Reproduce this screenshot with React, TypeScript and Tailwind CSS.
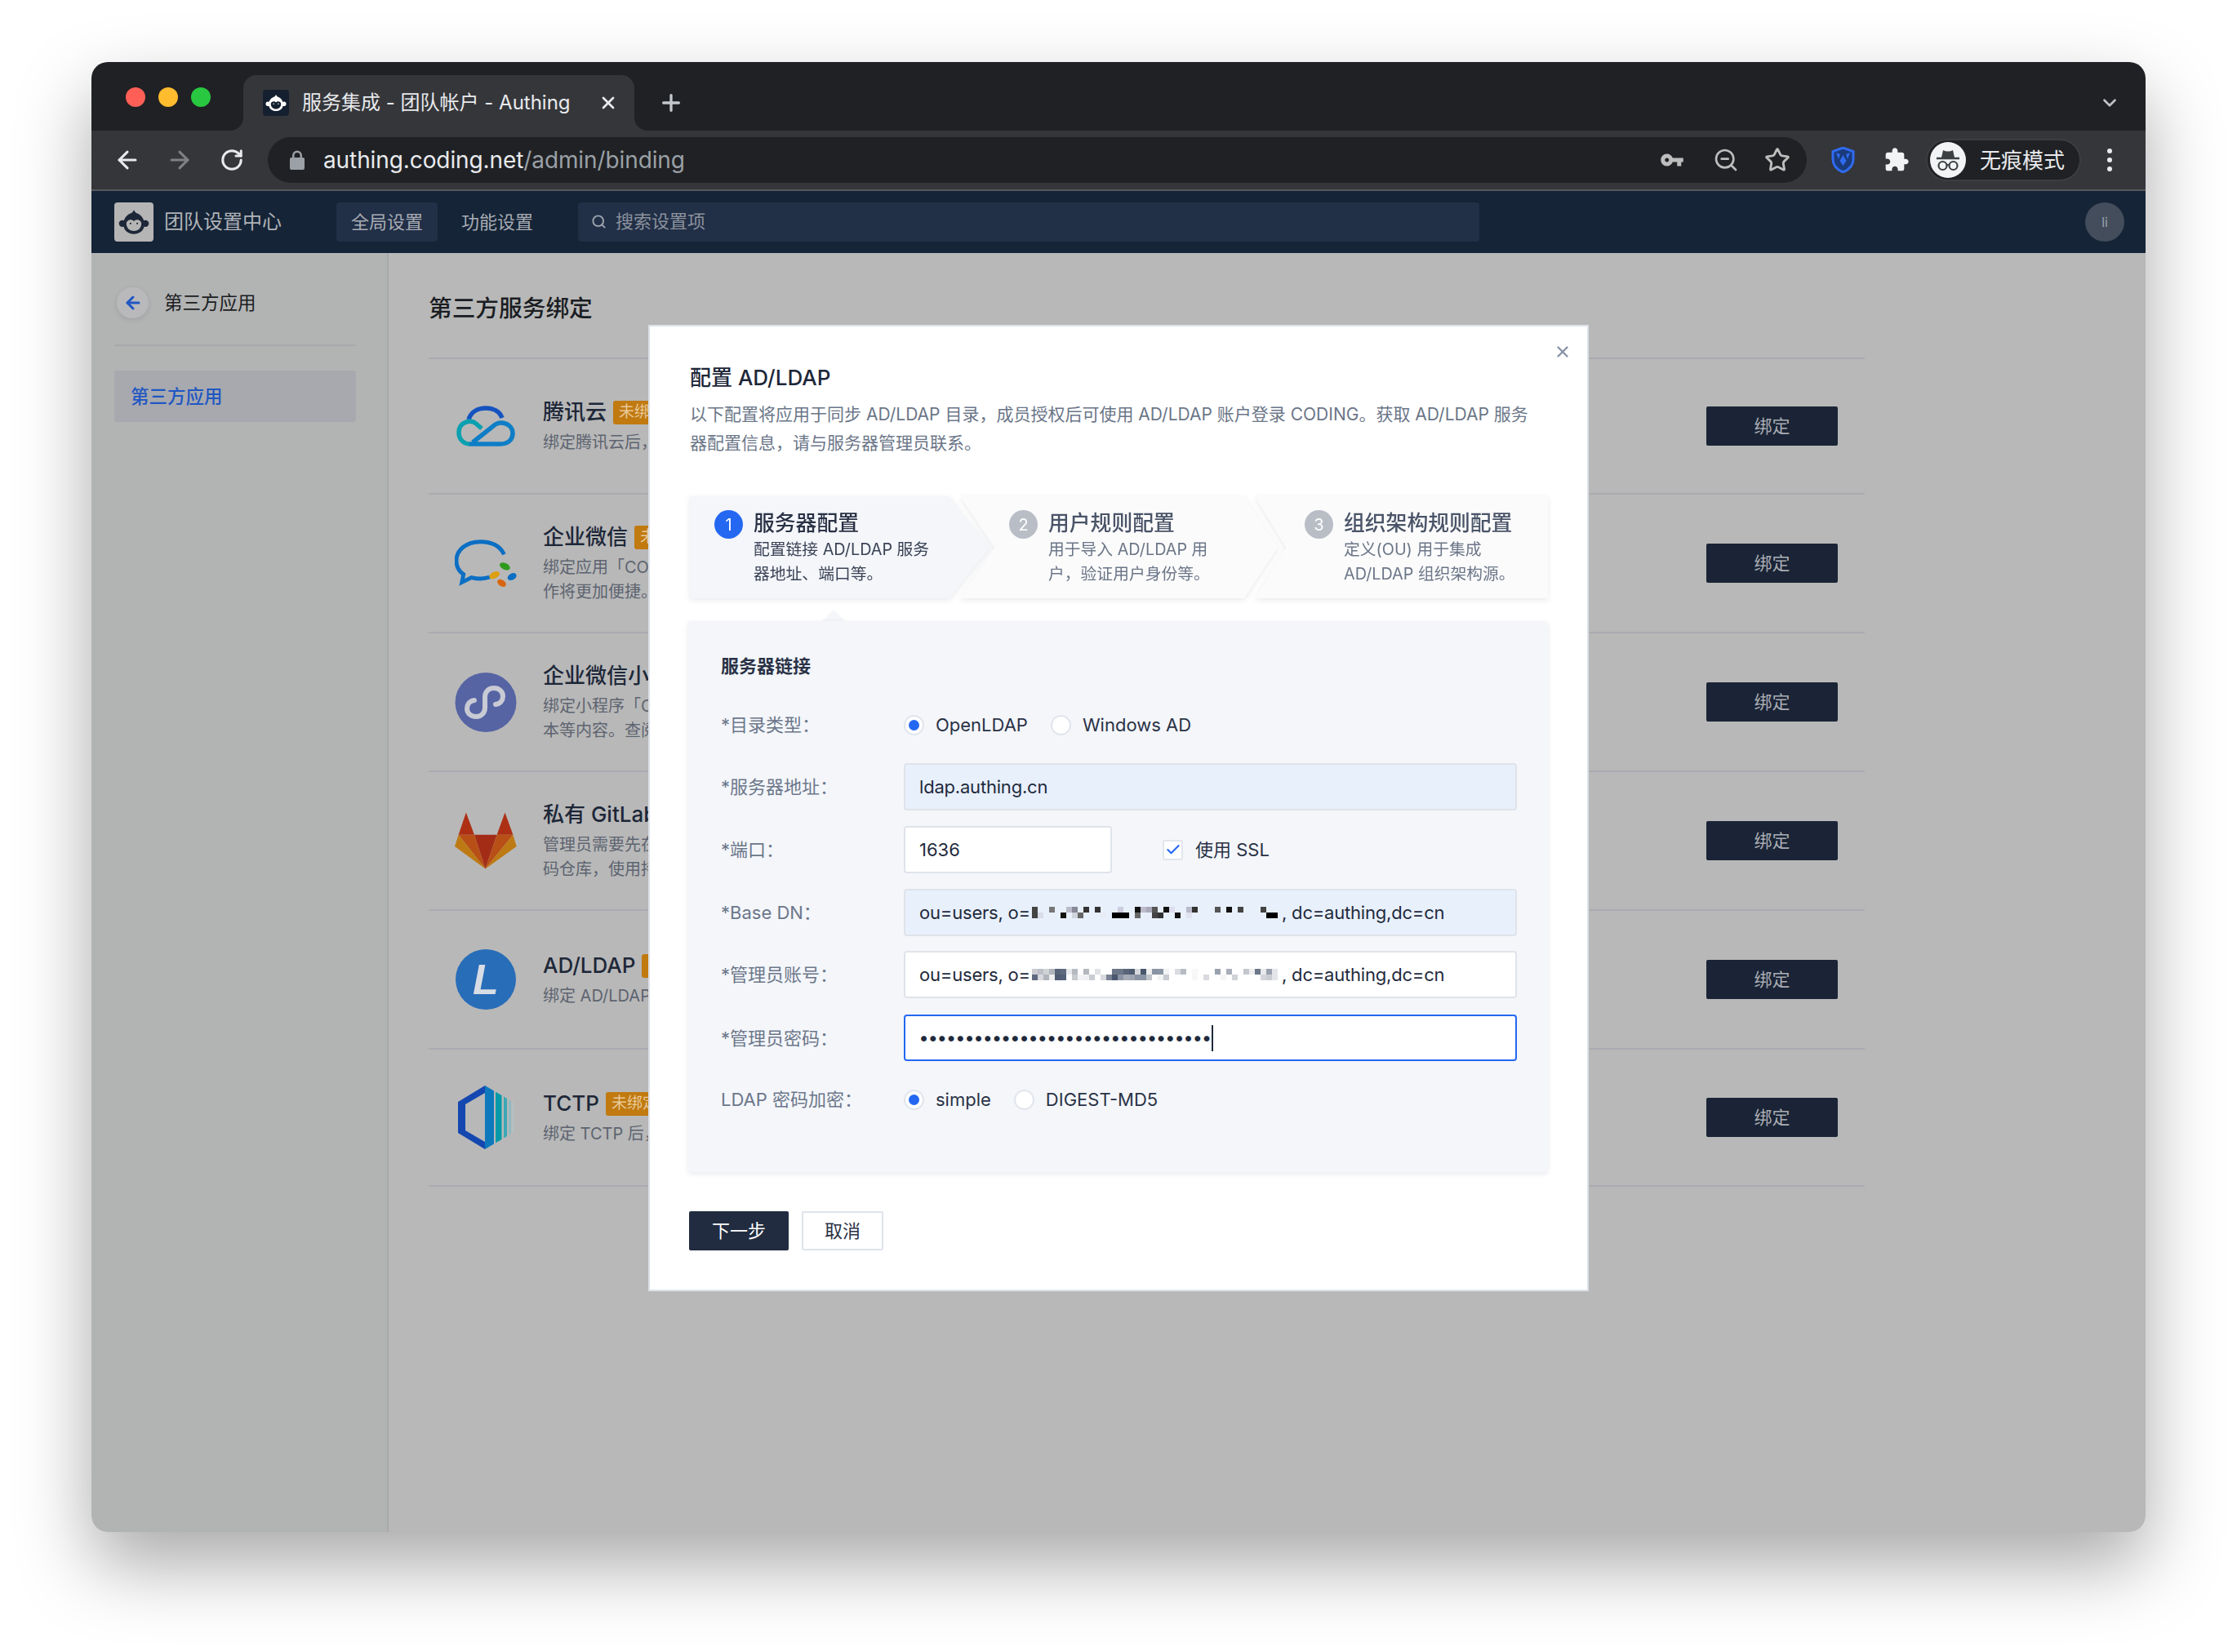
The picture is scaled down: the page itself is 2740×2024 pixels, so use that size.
import React from 'react';
import { ArrowLeft, ArrowRight, Check, ChevronDown, Plus, RotateCw, Search, Star, X, ZoomOut } from 'lucide-react';

const Monkey = ({ dark, light, size }: { dark: string; light: string; size: number }) => (
  <svg width={size} height={size} viewBox="0 0 48 48">
    <circle cx="8.5" cy="26" r="4.5" fill={dark} />
    <circle cx="39.5" cy="26" r="4.5" fill={dark} />
    <path d="M24 8c1 2 2 3 3 4 7 2 11 8 11 15 0 8-6 13-14 13S10 35 10 27c0-7 4-13 11-15 1-1 2-2 3-4z" fill={dark} />
    <path d="M14 26c0-3 3-5 6-5 2 0 3 1 4 2 1-1 2-2 4-2 3 0 6 2 6 5 0 6-4 10-10 10s-10-4-10-10z" fill={light} />
    <circle cx="19.5" cy="26" r="1.2" fill={dark} />
    <circle cx="28.5" cy="26" r="1.2" fill={dark} />
  </svg>
);

const CloudLogo = () => (
  <svg width="72" height="51" viewBox="0 0 72 51" fill="none" strokeWidth="5.5" strokeLinecap="round">
    <path d="M15 17C18 7 27 3 36 3s17 4 20 12" stroke="#1553c0" strokeLinecap="butt" />
    <path d="M31 28 24 22c-6-5-21-3-21 11 0 9 7 14 13 14" stroke="#0aa0b0" strokeLinecap="butt" />
    <path d="M16 47h38c10 0 15-6 15-13 0-9-8-13-14-13-5 0-8 2-11 5L20 45" stroke="#0e7ec6" strokeLinecap="butt" />
  </svg>
);

const WeworkLogo = () => (
  <svg width="78" height="60" viewBox="0 0 78 60" fill="none">
    <path d="M62 19C57 8 46 3 32 3 15 3 2 13 2 27c0 7 3 13 9 17l-2 10 12-6c4 1 7 1.500 11 1.500 4 0 8-.5 12-2" stroke="#0b6fc4" strokeWidth="5" />
    <ellipse cx="63" cy="34" rx="7" ry="4" transform="rotate(25 63 34)" fill="#2f9a1c" />
    <ellipse cx="50" cy="45" rx="7" ry="4" transform="rotate(-25 50 45)" fill="#dc9f10" />
    <ellipse cx="72" cy="47" rx="6" ry="4" transform="rotate(-30 72 47)" fill="#0b6fc4" />
    <ellipse cx="59" cy="55" rx="6" ry="4" transform="rotate(35 59 55)" fill="#d8650f" />
  </svg>
);

const MiniLogo = () => (
  <svg width="76" height="73" viewBox="0 0 76 73">
    <ellipse cx="38" cy="36.5" rx="37.5" ry="36.5" fill="#5664a4" />
    <path d="M24 34c-6 1-9 5-9 10 0 6 5 10 11 10 7 0 11-5 11-11V30c0-6 4-11 11-11 6 0 11 4 11 10 0 5-3 9-9 10" fill="none" stroke="#c8cad4" strokeWidth="6" strokeLinecap="round" />
  </svg>
);

const GitlabLogo = () => (
  <svg width="77" height="71" viewBox="0 0 77 71">
    <polygon points="14,0 4.7,27.6 24.3,27.6" fill="#ad2f14" />
    <polygon points="62.3,0 52.3,27.6 72.3,27.6" fill="#ad2f14" />
    <polygon points="24.3,27.6 52.3,27.6 38,70" fill="#a32c16" />
    <polygon points="4.7,27.6 24.3,27.6 38,70" fill="#b84f17" />
    <polygon points="72.3,27.6 52.3,27.6 38,70" fill="#b84f17" />
    <polygon points="4.7,27.6 0,42 38,70" fill="#bd7a14" />
    <polygon points="72.3,27.6 76.7,42 38,70" fill="#bd7a14" />
  </svg>
);

const LdapLogo = () => (
  <div className="flex h-[74px] w-[74px] items-center justify-center rounded-full bg-[#286db8] font-['Liberation_Sans',sans-serif] text-[52px] leading-none font-bold text-[#d8dce4] italic">
    L
  </div>
);

const TctpLogo = () => (
  <svg width="68" height="78" viewBox="0 0 68 78">
    <polygon points="33,0 0,20 0,58 33,78 33,69 9,55 9,23 33,9" fill="#1448b0" />
    <polygon points="33,0 44,6.5 44,71.5 33,78" fill="#0e78bc" />
    <polygon points="46,7.7 53.5,12 53.5,66 46,70.3" fill="#069aa8" />
    <polygon points="56,13.5 60,16 60,62 56,64.5" fill="#3aa9b6" />
    <polygon points="62.5,17.5 64.5,18.7 64.5,59.3 62.5,60.5" fill="#7fbcc6" />
    <polygon points="66.5,20 67.5,20.5 67.5,57.5 66.5,58" fill="#b0c8cf" />
  </svg>
);

const SERVICES = [
  { h: 'h-[166px]', logo: <CloudLogo />, title: '腾讯云', lines: ['绑定腾讯云后，可以使用腾讯云相关服务。'] },
  { h: 'h-[170px]', logo: <WeworkLogo />, title: '企业微信', lines: ['绑定应用「CODING」后，成员在企业微信内操', '作将更加便捷。'] },
  { h: 'h-[170px]', logo: <MiniLogo />, title: '企业微信小程序', lines: ['绑定小程序「CODING」后，可查看项目、版', '本等内容。查阅更多信息。'] },
  { h: 'h-[170px]', logo: <GitlabLogo />, title: '私有 GitLab', lines: ['管理员需要先在 GitLab 中绑定后才可导入代', '码仓库，使用持续集成。'] },
  { h: 'h-[170px]', logo: <LdapLogo />, title: 'AD/LDAP', lines: ['绑定 AD/LDAP 后，成员可使用账户登录。'] },
  { h: 'h-[168px]', logo: <TctpLogo />, title: 'TCTP', lines: ['绑定 TCTP 后，可以使用相关服务。'] },
];

const STEPS = [
  {
    n: '1',
    title: '服务器配置',
    desc: ['配置链接 AD/LDAP 服务', '器地址、端口等。'],
    outer: '',
    shape: 'w-[367px] pl-[30px] bg-[#f4f6fa] [clip-path:polygon(0_0,318px_0,367px_63px,318px_125px,0_125px)]',
    circle: 'bg-[#2468f2]',
  },
  {
    n: '2',
    title: '用户规则配置',
    desc: ['用于导入 AD/LDAP 用', '户，验证用户身份等。'],
    outer: '-ml-[36px]',
    shape: 'w-[389px] pl-[60px] bg-[#fbfbfb] [clip-path:polygon(0_0,348px_0,389px_63px,348px_125px,0_125px,42px_63px)]',
    circle: 'bg-[#b9bdc6]',
  },
  {
    n: '3',
    title: '组织架构规则配置',
    desc: ['定义(OU) 用于集成', 'AD/LDAP 组织架构源。'],
    outer: '-ml-[28px]',
    shape: 'w-[359px] pl-[61px] bg-[#fbfbfb] [clip-path:polygon(0_0,100%_0,100%_100%,0_100%,38px_63px)]',
    circle: 'bg-[#b9bdc6]',
  },
];

// mosaic cells: [col, row, colour]
const BASE_CELLS: [number, number, string][] = [
  [0, 0, '#444'], [3, 0, '#777'], [6, 0, '#bbc'], [7, 0, '#889'], [9, 0, '#333'], [11, 0, '#333'], [15, 0, '#ccd'],
  [18, 0, '#111'], [19, 0, '#bbc'], [20, 0, '#aab'], [21, 0, '#555'], [23, 0, '#111'], [24, 0, '#dde'], [27, 0, '#bbc'],
  [28, 0, '#333'], [32, 0, '#555'], [34, 0, '#111'], [36, 0, '#444'], [40, 0, '#444'],
  [0, 1, '#444'], [1, 1, '#d8dde8'], [5, 1, '#111'], [7, 1, '#d0d4dc'], [8, 1, '#666'], [12, 1, '#e8ecf4'], [14, 1, '#000'],
  [15, 1, '#000'], [16, 1, '#000'], [18, 1, '#666'], [21, 1, '#444'], [22, 1, '#333'], [25, 1, '#111'], [27, 1, '#dfe3f0'],
  [41, 1, '#000'], [42, 1, '#000'],
];

const ROW_A = ['#c9cbd0', '#bdbfc6', '#d0d2d6', '#b0b4bb', '#57647a', '#5f6a7e', '#e8e9ec', '#b5b9c0', '', '#b3b7be', '', '#dfe1e5', '', '', '#6b7688', '#6b7688', '#59657a', '#505c72', '#d6d8dc', '#4a566e', '#eeeeee', '#8a93a3', '#8d96a5', '#f2f3f5', '', '#dadce2', '#b7bbc4', '', '#f8f8f8', '', '', '', '#9aa1ae', '', '#a9aeb8', '', '', '#c3c7ce', '#eeeeee', '#6c7789', '#e8e9ec', '#9aa1ae', '#e3e5e9'];
const ROW_B = ['#5f6a7e', '#d8d9dd', '#b0b4bb', '#eeeeee', '#4f5b72', '#52607a', '', '#c8cbd0', '#f3f3f5', '#f0f0f2', '#c9ccd2', '', '#d8dadf', '#7b8495', '#4a566e', '#8a93a3', '#a5abb6', '#9ea5b1', '#8a93a3', '#8a93a3', '#c0c3ca', '', '#f2f3f5', '#c7cad1', '', '', '', '', '#f7f7f7', '', '#d8dadf', '', '', '#f5f5f5', '', '#d0d3d8', '', '', '', '', '#d3d5da', '#c9ccd2', '#e3e5e9'];

const Mosaic = ({ cells }: { cells: [number, number, string][] }) => (
  <svg width="306" height="14" viewBox="0 0 306 14" className="ml-[2px] inline-block">
    {cells.map(([c, r, f], i) => (
      <rect key={i} x={c * 7} y={r * 7} width="7" height="7" fill={f} />
    ))}
  </svg>
);

const ADMIN_CELLS: [number, number, string][] = [
  ...ROW_A.map((f, i) => [i, 0, f] as [number, number, string]),
  ...ROW_B.map((f, i) => [i, 1, f] as [number, number, string]),
].filter((c) => c[2] !== '');

const Radio = ({ on }: { on?: boolean }) => (
  <span className="flex h-[25px] w-[25px] shrink-0 items-center justify-center rounded-full border-2 border-[#e1e5ec] bg-white">
    {on && <span className="h-[13px] w-[13px] rounded-full bg-[#2468f2]" />}
  </span>
);

const Label = ({ children }: { children: React.ReactNode }) => (
  <div className="w-[224px] shrink-0 text-[22px] leading-[32px] text-[#6c778a]">{children}</div>
);

export default function App() {
  return (
    <div className="h-[2024px] w-[2740px] overflow-hidden bg-white pt-[76px] pl-[112px] font-['Inter','Noto_Sans_CJK_SC',sans-serif]">
      <div className="relative flex h-[1801px] w-[2516px] flex-col overflow-hidden rounded-[20px] shadow-[0_40px_90px_rgba(0,0,0,0.34)]">
        {/* Tab strip */}
        <div className="flex h-[84px] shrink-0 bg-[#202124] pl-[42px]">
          <div className="mt-[31px] flex gap-[16px]">
            <span className="h-[24px] w-[24px] rounded-full bg-[#ff5f57]" />
            <span className="h-[24px] w-[24px] rounded-full bg-[#febc2e]" />
            <span className="h-[24px] w-[24px] rounded-full bg-[#28c840]" />
          </div>
          <div className="relative mt-[16px] ml-[40px] flex h-[68px] w-[479px] items-center rounded-t-[16px] bg-[#35363a] pl-[24px]">
            <span className="absolute bottom-0 -left-[16px] h-[16px] w-[16px] bg-[#35363a]">
              <span className="block h-[16px] w-[16px] rounded-br-[16px] bg-[#202124]" />
            </span>
            <span className="absolute -right-[16px] bottom-0 h-[16px] w-[16px] bg-[#35363a]">
              <span className="block h-[16px] w-[16px] rounded-bl-[16px] bg-[#202124]" />
            </span>
            <span className="flex h-[32px] w-[32px] items-center justify-center rounded-[4px] bg-[#14202f]">
              <Monkey dark="#ffffff" light="#14202f" size={30} />
            </span>
            <span className="ml-[16px] text-[24px] whitespace-nowrap text-[#e8eaed]">服务集成 - 团队帐户 - Authing</span>
            <X size={24} strokeWidth={2.8} className="absolute right-[20px] text-[#e8eaed]" />
          </div>
          <Plus size={32} strokeWidth={2.5} className="mt-[34px] ml-[29px] text-[#c4c7cb]" />
          <ChevronDown size={26} strokeWidth={2.5} className="mt-[37px] mr-[31px] ml-auto text-[#bdc1c6]" />
        </div>

        {/* Toolbar */}
        <div className="flex h-[74px] shrink-0 items-center border-b-2 border-[#58595c] bg-[#35363a] pl-[12px]">
          <span className="flex w-[64px] justify-center"><ArrowLeft size={34} strokeWidth={2.2} className="text-[#e8eaed]" /></span>
          <span className="flex w-[64px] justify-center"><ArrowRight size={34} strokeWidth={2.2} className="text-[#7f8184]" /></span>
          <span className="flex w-[64px] justify-center"><RotateCw size={30} strokeWidth={2.4} className="text-[#e8eaed]" /></span>
          <div className="ml-[12px] flex h-[56px] w-[1885px] items-center rounded-full bg-[#202124] pl-[27px]">
            <svg width="18" height="24" viewBox="0 0 18 24" fill="#9aa0a6">
              <path d="M3 9V6.5a6 6 0 0 1 12 0V9h1a2 2 0 0 1 2 2v11a2 2 0 0 1-2 2H2a2 2 0 0 1-2-2V11a2 2 0 0 1 2-2h1zm2.5 0h7V6.5a3.5 3.5 0 0 0-7 0V9z" />
            </svg>
            <span className="ml-[23px] text-[28px] tracking-[-0.1px] text-[#e8eaed]">
              authing.coding.net<span className="text-[#9aa0a6]">/admin/binding</span>
            </span>
            <svg width="30" height="30" viewBox="0 0 24 24" fill="#bdbdbd" className="ml-auto">
              <path d="M12.65 10C11.83 7.67 9.61 6 7 6c-3.31 0-6 2.69-6 6s2.69 6 6 6c2.61 0 4.83-1.67 5.65-4H17v4h4v-4h2v-4H12.65zM7 14c-1.1 0-2-.9-2-2s.9-2 2-2 2 .9 2 2-.9 2-2 2z" />
            </svg>
            <ZoomOut size={32} strokeWidth={2} className="ml-[35px] text-[#bdbdbd]" />
            <Star size={32} strokeWidth={2.2} className="mr-[20px] ml-[31px] text-[#bdbdbd]" />
          </div>
          <svg width="29" height="32" viewBox="0 0 29 32" className="ml-[30px]">
            <path d="M14.5 1 27 5.5V15c0 8-5.500 13-12.500 16C7.500 28 2 23 2 15V5.500L14.500 1z" fill="#1a3a7a" stroke="#2f6bf0" strokeWidth="3" />
            <path d="M14.500 10l4 7-4 6-4-6 4-7zM6 7l5 2-2 6zM23 7l-5 2 2 6z" fill="#2f6bf0" />
          </svg>
          <svg width="32" height="32" viewBox="0 0 24 24" fill="#f1f3f4" className="ml-[35px]">
            <path d="M20.500 11H19V7c0-1.100-.9-2-2-2h-4V3.500C13 2.120 11.880 1 10.500 1S8 2.120 8 3.500V5H4c-1.100 0-1.990.9-1.990 2v3.800H3.500c1.490 0 2.700 1.210 2.700 2.700s-1.210 2.700-2.700 2.700H2V20c0 1.100.9 2 2 2h3.800v-1.500c0-1.490 1.210-2.700 2.700-2.700 1.490 0 2.700 1.210 2.700 2.700V22H17c1.100 0 2-.9 2-2v-4h1.500c1.380 0 2.500-1.120 2.500-2.500S21.880 11 20.500 11z" />
          </svg>
          <div className="ml-[20px] flex h-[52px] w-[190px] items-center rounded-full border-2 border-[#3c3d41] bg-[#202124] pl-[3px]">
            <span className="flex h-[44px] w-[44px] items-center justify-center rounded-full bg-[#f1f3f4]">
              <svg width="34" height="30" viewBox="0 0 34 30" fill="none">
                <path d="M9 12 11 3c2 1 4 1.500 6 1.500S21 4 23 3l2 9z" fill="#3c4043" />
                <path d="M3 13h28" stroke="#3c4043" strokeWidth="2.500" />
                <circle cx="10.500" cy="22" r="5" stroke="#3c4043" strokeWidth="2.200" />
                <circle cx="23.500" cy="22" r="5" stroke="#3c4043" strokeWidth="2.200" />
                <path d="M15.500 21h3" stroke="#3c4043" strokeWidth="2" />
              </svg>
            </span>
            <span className="ml-[17px] text-[26px] whitespace-nowrap text-[#e8eaed]">无痕模式</span>
          </div>
          <div className="ml-[32px] flex flex-col gap-[5px]">
            <span className="h-[6px] w-[6px] rounded-full bg-[#e8eaed]" />
            <span className="h-[6px] w-[6px] rounded-full bg-[#e8eaed]" />
            <span className="h-[6px] w-[6px] rounded-full bg-[#e8eaed]" />
          </div>
        </div>

        {/* App header */}
        <div className="flex h-[76px] shrink-0 items-center bg-[#152437] pl-[28px]">
          <span className="flex h-[48px] w-[48px] items-center justify-center rounded-[4px] bg-[#b5b5b5]">
            <Monkey dark="#1d2738" light="#b5b5b5" size={44} />
          </span>
          <span className="ml-[13px] text-[24px] text-[#b0b3b8]">团队设置中心</span>
          <span className="ml-[67px] flex h-[48px] w-[124px] items-center justify-center rounded-[4px] bg-[#212f47] text-[22px] text-[#a8acb3]">全局设置</span>
          <span className="ml-[11px] flex h-[48px] w-[124px] items-center justify-center text-[22px] text-[#a8acb3]">功能设置</span>
          <div className="ml-[37px] flex h-[48px] w-[1104px] items-center rounded-[4px] bg-[#212f47] pb-[2px] pl-[16px]">
            <Search size={19} strokeWidth={2.5} className="text-[#9aa0aa]" />
            <span className="ml-[11px] text-[22px] text-[#8b919c]">搜索设置项</span>
          </div>
          <span className="mr-[26px] ml-auto flex h-[48px] w-[48px] items-center justify-center rounded-full bg-[#434d5c] text-[16px] text-[#9aa0aa]">li</span>
        </div>

        {/* Body */}
        <div className="flex min-h-0 flex-1">
          <aside className="w-[364px] shrink-0 border-r-2 border-[#a8a9ac] bg-[#b2b3b3] pt-[42px] pr-[38px] pl-[28px]">
            <div className="flex items-center">
              <span className="ml-[3px] flex h-[38px] w-[39px] items-center justify-center rounded-full bg-[#b9b9bc] shadow-[0_2px_6px_rgba(0,0,0,0.1)]">
                <ArrowLeft size={24} strokeWidth={3} className="text-[#1f57c3]" />
              </span>
              <span className="ml-[19px] text-[22.500px] text-[#1a1d22]">第三方应用</span>
            </div>
            <div className="mt-[32px] h-[2px] bg-[#a8a9ac]" />
            <div className="mt-[30px] flex h-[63px] items-center rounded-[3px] bg-[#a7a9ae] pl-[20px] text-[22.500px] font-medium text-[#1f57c3]">第三方应用</div>
          </aside>
          <main className="flex-1 bg-[#b8b8b8] pl-[49px]">
            <h1 className="pt-[48px] text-[28.700px] leading-[40px] font-medium text-[#1a1d22]">第三方服务绑定</h1>
            <div className="w-[1759px]">
              <div className="mt-[40px] h-[2px] bg-[#a9abb0]" />
              {SERVICES.map((s) => (
                <div key={s.title} className={`flex items-center border-b-2 border-[#a9abb0] pr-[33px] pl-[32px] ${s.h}`}>
                  <div className="flex w-[76px] shrink-0 justify-center">{s.logo}</div>
                  <div className="ml-[32px] min-w-0 flex-1">
                    <div className="flex items-center">
                      <span className="text-[26px] leading-[36px] font-medium whitespace-nowrap text-[#1d2738]">{s.title}</span>
                      <span className="ml-[8px] flex h-[29px] items-center rounded-[3px] bg-[#c17a10] px-[7px] text-[19px] whitespace-nowrap text-[#e8c998]">未绑定</span>
                    </div>
                    <div className="mt-[4px] text-[20px] leading-[30px] text-[#5d6470]">
                      {s.lines.map((l) => (
                        <div key={l}>{l}</div>
                      ))}
                    </div>
                  </div>
                  <button className="h-[48px] w-[161px] shrink-0 rounded-[2px] bg-[#1a2436] text-[22px] text-[#a9acb3]">绑定</button>
                </div>
              ))}
            </div>
          </main>
        </div>

        {/* Modal */}
        <div className="absolute top-[322px] left-[682px] h-[1184px] w-[1152px] border-2 border-[#dde1e8] bg-white pt-[45px] pl-[49px]">
          <X size={22} strokeWidth={2.5} className="absolute top-[20px] right-[19px] text-[#8791a6]" />
          <h2 className="text-[26px] leading-[36px] font-medium text-[#1d2738]">配置 AD/LDAP</h2>
          <p className="mt-[9px] text-[21px] leading-[35px] whitespace-nowrap text-[#6b7688]">
            以下配置将应用于同步 AD/LDAP 目录，成员授权后可使用 AD/LDAP 账户登录 CODING。获取 AD/LDAP 服务
            <br />
            器配置信息，请与服务器管理员联系。
          </p>

          <div className="mt-[48px] flex">
            {STEPS.map((s) => (
              <div key={s.n} className={`drop-shadow-[0_2px_3px_rgba(20,30,60,0.1)] ${s.outer}`}>
                <div className={`flex h-[125px] pt-[17px] ${s.shape}`}>
                  <span className={`flex h-[35px] w-[35px] shrink-0 items-center justify-center rounded-full text-[20px] text-white ${s.circle}`}>{s.n}</span>
                  <div className="ml-[13px]">
                    <div className={`text-[25.800px] leading-[32px] font-medium whitespace-nowrap ${s.n === '1' ? 'text-[#2a3246]' : 'text-[#4a5468]'}`}>{s.title}</div>
                    <div className={`mt-[1px] text-[19.800px] leading-[30px] whitespace-nowrap ${s.n === '1' ? 'text-[#3a4356]' : 'text-[#6b7688]'}`}>
                      <div>{s.desc[0]}</div>
                      <div>{s.desc[1]}</div>
                    </div>
                  </div>
                </div>
              </div>
            ))}
          </div>

          <div className="mt-[14px] ml-[162px] h-0 w-0 border-x-[14px] border-b-[14px] border-x-transparent border-b-[#f4f6fa]" />

          <div className="-ml-[2px] h-[675px] w-[1053px] rounded-[4px] bg-[#f4f6fa] pt-[39px] pr-[38px] pl-[40px] shadow-[0_2px_6px_rgba(20,30,60,0.1)]">
            <div className="text-[22px] leading-[32px] font-semibold text-[#2a3246]">服务器链接</div>

            <div className="mt-[36px] flex h-[40px] items-center">
              <Label>*目录类型：</Label>
              <Radio on />
              <span className="ml-[14px] text-[22px] text-[#2a3246]">OpenLDAP</span>
              <span className="ml-[28px]"><Radio /></span>
              <span className="ml-[14px] text-[22px] text-[#2a3246]">Windows AD</span>
            </div>

            <div className="mt-[27px] flex items-center">
              <Label>*服务器地址：</Label>
              <div className="flex h-[58px] w-[752px] items-center rounded-[4px] border-2 border-[#dfe3ea] bg-[#e8f0fc] pl-[17px] text-[22px] tracking-[-0.2px] text-[#1f2a3c]">ldap.authing.cn</div>
            </div>

            <div className="mt-[19px] flex items-center">
              <Label>*端口：</Label>
              <div className="flex h-[58px] w-[255px] items-center rounded-[4px] border-2 border-[#dfe3ea] bg-white pl-[17px] text-[22px] text-[#1f2a3c]">1636</div>
              <span className="ml-[62px] flex h-[25px] w-[25px] items-center justify-center rounded-[3px] border-2 border-[#e1e5ec] bg-white">
                <Check size={20} strokeWidth={2.5} className="text-[#2468f2]" />
              </span>
              <span className="ml-[15px] text-[22px] text-[#2a3246]">使用 SSL</span>
            </div>

            <div className="mt-[19px] flex items-center">
              <Label>*Base DN：</Label>
              <div className="flex h-[58px] w-[752px] items-center rounded-[4px] border-2 border-[#dfe3ea] bg-[#e8f0fc] pl-[17px] text-[22px] tracking-[-0.2px] whitespace-pre text-[#1f2a3c]">
                ou=users, o=<Mosaic cells={BASE_CELLS} />, dc=authing,dc=cn
              </div>
            </div>

            <div className="mt-[18px] flex items-center">
              <Label>*管理员账号：</Label>
              <div className="flex h-[58px] w-[752px] items-center rounded-[4px] border-2 border-[#dfe3ea] bg-white pl-[17px] text-[22px] tracking-[-0.2px] whitespace-pre text-[#1f2a3c]">
                ou=users, o=<Mosaic cells={ADMIN_CELLS} />, dc=authing,dc=cn
              </div>
            </div>

            <div className="mt-[20px] flex items-center">
              <Label>*管理员密码：</Label>
              <div className="flex h-[57px] w-[752px] items-center rounded-[4px] border-2 border-[#2468f2] bg-white pl-[17px] text-[22px] font-semibold tracking-[0.1px] text-[#1f2a3c]">
                <span>••••••••••••••••••••••••••••••••</span>
                <span className="h-[32px] w-[2px] bg-[#1f2a3c]" />
              </div>
            </div>

            <div className="mt-[27px] flex h-[40px] items-center">
              <Label>LDAP 密码加密：</Label>
              <Radio on />
              <span className="ml-[14px] text-[22px] text-[#2a3246]">simple</span>
              <span className="ml-[28px]"><Radio /></span>
              <span className="ml-[14px] text-[22px] text-[#2a3246]">DIGEST-MD5</span>
            </div>
          </div>

          <div className="mt-[48px] -ml-[1px] flex">
            <button className="h-[48px] w-[122px] rounded-[2px] bg-[#212c40] text-[22px] text-white">下一步</button>
            <button className="ml-[16px] h-[48px] w-[100px] rounded-[2px] border-2 border-[#dfe3ea] bg-white text-[22px] text-[#2a3246]">取消</button>
          </div>
        </div>
      </div>
    </div>
  );
}
